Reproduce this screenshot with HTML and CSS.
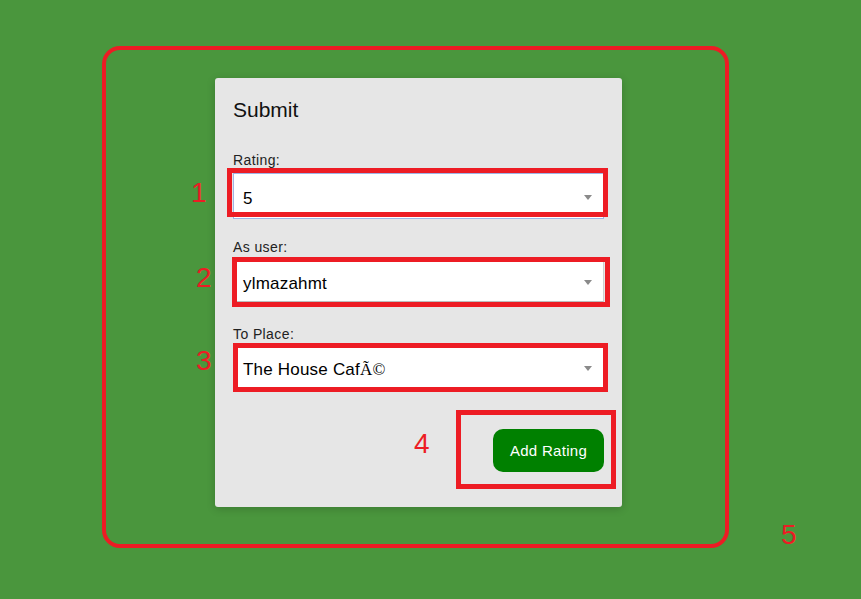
FILE: index.html
```html
<!DOCTYPE html>
<html>
<head>
<meta charset="utf-8">
<link rel="stylesheet" href="styles.css">
</head>
<body>
<main class="page">
  <form class="card">
    <h2 class="title">Submit</h2>
    <div class="field field-rating">
      <label class="label">Rating:</label>
      <div class="select select-focus"><span class="value">5</span><i class="arrow"></i></div>
    </div>
    <div class="field field-user">
      <label class="label">As user:</label>
      <div class="select"><span class="value">ylmazahmt</span><i class="arrow"></i></div>
    </div>
    <div class="field field-place">
      <label class="label">To Place:</label>
      <div class="select"><span class="value">The House Caf<span class="moji">Ã©</span></span><i class="arrow"></i></div>
    </div>
    <div class="actions">
      <button type="button" class="btn">Add Rating</button>
    </div>
  </form>
</main>

<div class="mark mark-outer"></div>
<div class="mark mark-1"></div>
<div class="mark mark-2"></div>
<div class="mark mark-3"></div>
<div class="mark mark-4"></div>
<span class="num num-1">1</span>
<span class="num num-2">2</span>
<span class="num num-3">3</span>
<span class="num num-4">4</span>
<span class="num num-5">5</span>
</body>
</html>
```
FILE: styles.css
```css
html, body {
  margin: 0;
  padding: 0;
  background: #4a963d;
  width: 861px;
  height: 599px;
  overflow: hidden;
  font-family: "Liberation Sans", Arial, sans-serif;
  position: relative;
}

.page {
  padding: 78px 0 0 215px;
}

.card {
  width: 371px;
  padding: 20px 18px 35px 18px;
  background: #e6e6e6;
  border-radius: 3px;
  box-shadow: 0 2px 8px rgba(0, 0, 0, 0.18);
  display: flex;
  flex-direction: column;
}

.title {
  margin: 0 0 30px 0;
  font-size: 21px;
  line-height: 24px;
  font-weight: normal;
  color: #111;
}

.field {
  display: flex;
  flex-direction: column;
  gap: 5px;
}

.field-rating { margin-bottom: 20px; }
.field-rating .select { height: 46px; }
.field-user { margin-bottom: 24px; }
.field-user .select { height: 42px; border-bottom-color: #bdbdbd; }
.field-place .select { height: 41px; }

.label {
  font-size: 14px;
  line-height: 16px;
  letter-spacing: 0.4px;
  color: #222;
}

.select {
  box-sizing: border-box;
  background: #fff;
  border: 1px solid #cfcfcf;
  display: flex;
  align-items: center;
  justify-content: space-between;
  padding: 0 11px 0 9px;
  font-size: 17px;
  letter-spacing: 0.2px;
  color: #000;
}

.value {
  padding-top: 5px;
}

.select-focus {
  border-color: #9fb4e6;
}

.moji {
  font-family: "Liberation Serif", "Times New Roman", serif;
}

.arrow {
  width: 0;
  height: 0;
  margin-top: 2px;
  border-left: 4px solid transparent;
  border-right: 4px solid transparent;
  border-top: 5px solid #8a8a8a;
}

.actions {
  display: flex;
  justify-content: flex-end;
  margin-top: 41px;
}

.btn {
  width: 111px;
  height: 43px;
  border: none;
  border-radius: 10px;
  background: #008000;
  color: #fff;
  font-family: "Liberation Sans", Arial, sans-serif;
  font-size: 15px;
  letter-spacing: 0.3px;
  padding: 0;
}

/* annotation overlays */
.mark {
  position: absolute;
  box-sizing: border-box;
  border: 5px solid #ed1c24;
}

.mark-outer {
  left: 102px;
  top: 46px;
  width: 627px;
  height: 502px;
  border-width: 4px;
  border-radius: 18px;
}

.mark-1 { left: 227px; top: 168px; width: 381px; height: 49px; }
.mark-2 { left: 232px; top: 257px; width: 378px; height: 50px; }
.mark-3 { left: 233px; top: 343px; width: 375px; height: 49px; }
.mark-4 { left: 456px; top: 410px; width: 160px; height: 79px; }

.num {
  position: absolute;
  font-family: "Liberation Sans", Arial, sans-serif;
  font-size: 28px;
  line-height: 28px;
  color: #ed1c24;
}

.num-1 { left: 191px; top: 179px; }
.num-2 { left: 196px; top: 264px; }
.num-3 { left: 196px; top: 347px; }
.num-4 { left: 414px; top: 430px; }
.num-5 { left: 781px; top: 521px; }
```
